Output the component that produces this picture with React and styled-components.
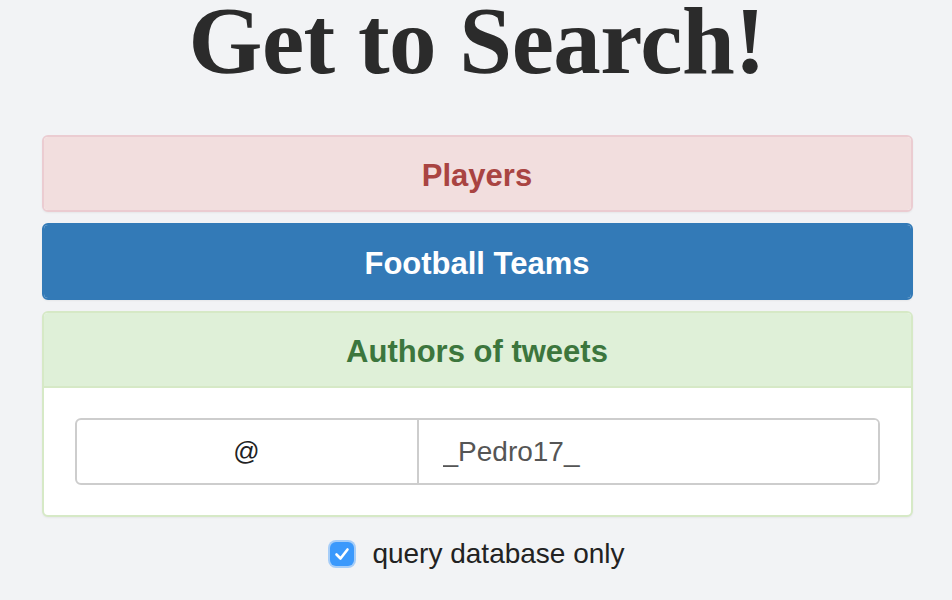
import React from "react"
import styled, { createGlobalStyle } from "styled-components"

const GlobalStyle = createGlobalStyle`
  body {
    margin: 0;
    background: #f2f3f5;
    font-family: "Liberation Sans", Arial, sans-serif;
    color: #333;
  }
`

const Page = styled.div`
  width: 871px;
  margin: 0 auto;
  padding-left: 2px;
`

const Title = styled.h1`
  margin: 0;
  height: 135px;
  font-family: "Liberation Serif", "Times New Roman", serif;
  font-weight: bold;
  font-size: 95px;
  line-height: 82px;
  text-align: center;
  color: #2b2b2b;
  letter-spacing: -0.5px;
`

const tones = {
  danger: { bg: "#f2dede", border: "#ebccd1", color: "#a94442" },
  primary: { bg: "#337ab7", border: "#337ab7", color: "#fff" },
  success: { bg: "#dff0d8", border: "#d6e9c6", color: "#3c763d" },
}

const Panel = styled.div`
  border: 2px solid ${(p) => tones[p.$tone].border};
  border-radius: 6px;
  background: #fff;
  margin-bottom: 11px;
  overflow: hidden;
  box-shadow: 0 1px 2px rgba(0, 0, 0, 0.05);
`

const PanelHeading = styled.div`
  background: ${(p) => tones[p.$tone].bg};
  color: ${(p) => tones[p.$tone].color};
  text-align: center;
  font-size: 31px;
  font-weight: bold;
  line-height: 34px;
  padding: 22px 15px 17px;
  border-bottom: ${(p) => (p.$open ? `2px solid ${tones[p.$tone].border}` : "none")};
`

const PanelBody = styled.div`
  padding: 30px 31px;
`

const InputGroup = styled.div`
  display: flex;
  height: 67px;
  border: 2px solid #cdcdcd;
  border-radius: 6px;
  box-sizing: border-box;
  overflow: hidden;
`

const Addon = styled.div`
  width: 340px;
  display: flex;
  align-items: center;
  justify-content: center;
  font-size: 26px;
  color: #222;
  border-right: 2px solid #cdcdcd;
`

const TextInput = styled.input`
  flex: 1;
  border: none;
  outline: none;
  padding: 0 24px;
  font-family: "Liberation Sans", Arial, sans-serif;
  font-size: 28px;
  color: #555;
  background: #fff;
`

const CheckRow = styled.label`
  display: flex;
  align-items: center;
  justify-content: center;
  gap: 17px;
  margin-top: 21px;
  font-size: 28px;
  color: #222;
`

const Box = styled.span`
  width: 24px;
  height: 24px;
  margin: 0 1px;
  border-radius: 6px;
  background: #3b99fc;
  box-shadow: 0 0 0 2px #a6cdf8;
  display: flex;
  align-items: center;
  justify-content: center;
`

export default function App() {
  return (
    <>
      <GlobalStyle />
      <Page>
        <Title>Get to Search!</Title>
        <Panel $tone="danger">
          <PanelHeading $tone="danger">Players</PanelHeading>
        </Panel>
        <Panel $tone="primary">
          <PanelHeading $tone="primary">Football Teams</PanelHeading>
        </Panel>
        <Panel $tone="success">
          <PanelHeading $tone="success" $open>
            Authors of tweets
          </PanelHeading>
          <PanelBody>
            <InputGroup>
              <Addon>@</Addon>
              <TextInput defaultValue="_Pedro17_" />
            </InputGroup>
          </PanelBody>
        </Panel>
        <CheckRow>
          <Box>
            <svg width="16" height="14" viewBox="0 0 16 14">
              <path d="M2.5 7.5 L6.5 11.5 L13.5 2.5" fill="none" stroke="#fff" strokeWidth="2.6" strokeLinecap="round" strokeLinejoin="round" />
            </svg>
          </Box>
          query database only
        </CheckRow>
      </Page>
    </>
  )
}
